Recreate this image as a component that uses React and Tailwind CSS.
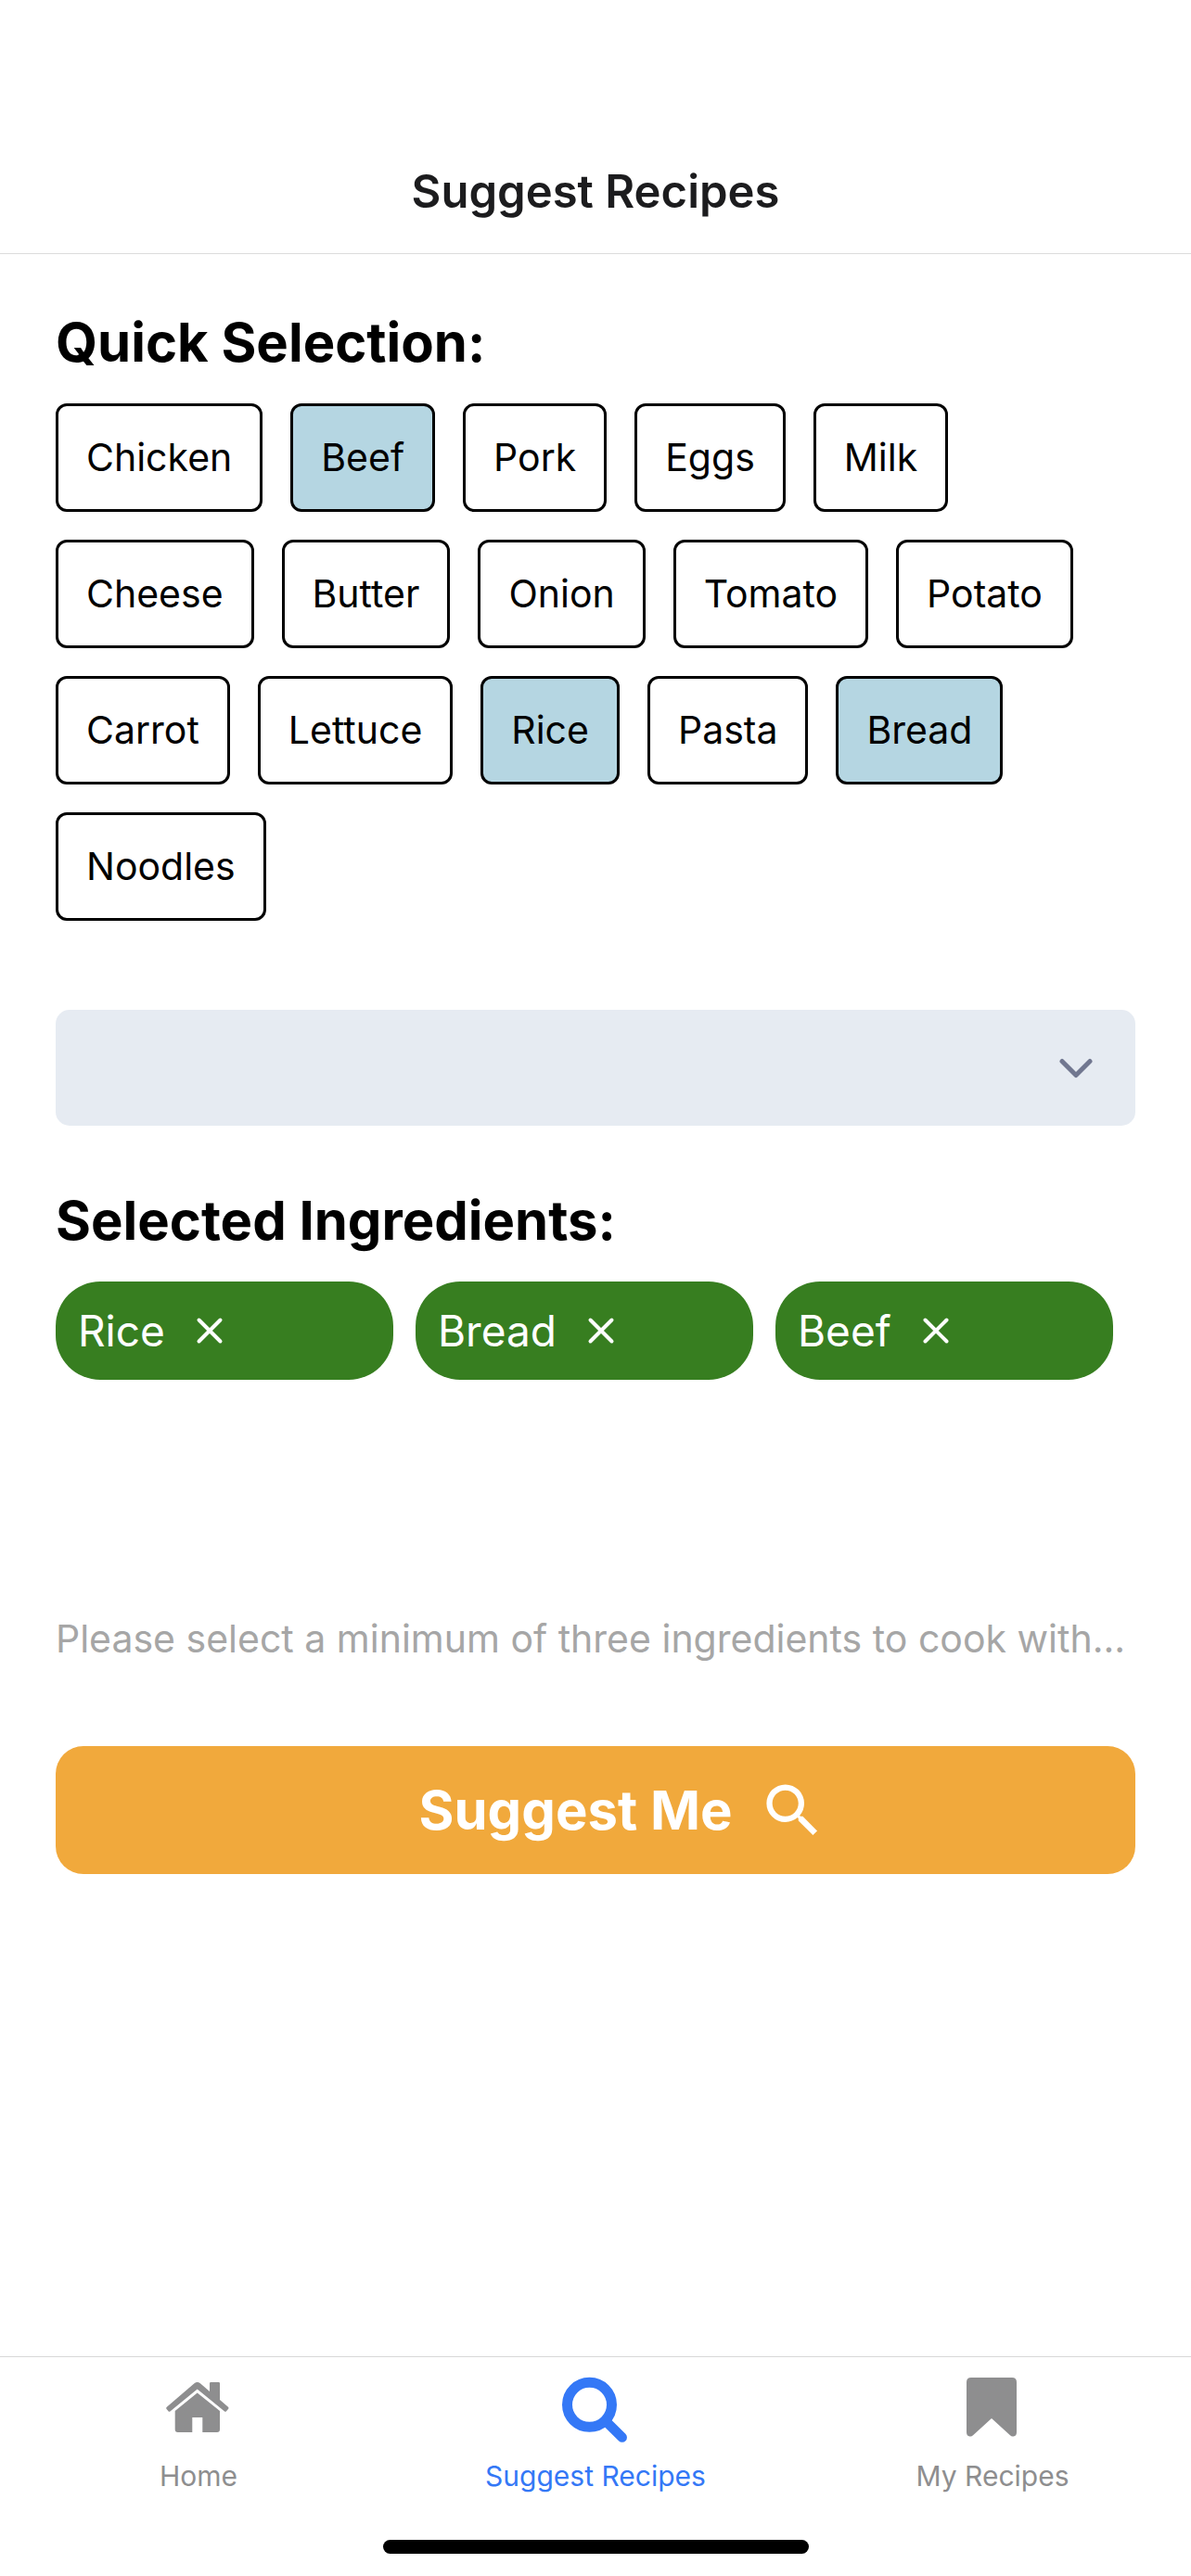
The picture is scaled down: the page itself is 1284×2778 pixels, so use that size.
import { useState } from "react";

const INGREDIENTS = [
  "Chicken", "Beef", "Pork", "Eggs", "Milk",
  "Cheese", "Butter", "Onion", "Tomato", "Potato",
  "Carrot", "Lettuce", "Rice", "Pasta", "Bread", "Noodles",
];

function HomeIcon() {
  return (
    <svg viewBox="0 0 72 72" className="size-[72px]" fill="currentColor" aria-hidden="true">
      <path d="M1.800 35.800 L31.500 10.200 Q34.700 7.600 37.900 10.200 L48 19 V10.200 Q48 9 49.200 9 H57.800 Q59 9 59 10.200 V28 L68 35.800 Q69 36.700 68.200 37.700 L66 40.300 Q65.100 41.300 64.100 40.500 L34.700 16.500 L5.400 40.500 Q4.400 41.300 3.500 40.300 L1.400 37.700 Q0.700 36.700 1.800 35.800 Z" />
      <path d="M34.700 20.500 L59 40 V60 Q59 63 56 63 H40.300 V47 H29.300 V63 H13.700 Q10.700 63 10.700 60 V40 Z" />
    </svg>
  );
}

function TabSearchIcon() {
  return (
    <svg viewBox="0 0 72 72" className="size-[72px] overflow-visible" fill="none" stroke="currentColor" aria-hidden="true">
      <circle cx="29.500" cy="33.300" r="24" strokeWidth="11" />
      <path d="M46.500 50.500 L64.700 68.500" strokeWidth="10.500" strokeLinecap="round" />
    </svg>
  );
}

function BookmarkIcon() {
  return (
    <svg viewBox="0 0 72 72" className="size-[72px]" fill="currentColor" aria-hidden="true">
      <path d="M13 4 H57 Q62 4 62 9 V63 Q62 67 58.500 67.500 Q56.500 67.800 55 66.200 L35 48 L15 66.200 Q13.500 67.800 11.500 67.500 Q8 67 8 63 V9 Q8 4 13 4 Z" />
    </svg>
  );
}

function SearchIcon() {
  return (
    <svg viewBox="0 0 24 24" className="size-[75px]" fill="currentColor" aria-hidden="true">
      <path d="M15.500 14h-.79l-.28-.27A6.471 6.471 0 0 0 16 9.500 6.500 6.500 0 1 0 9.500 16c1.610 0 3.090-.59 4.230-1.570l.27.28v.79l5 4.990L20.490 19l-4.990-5zm-6 0C7.010 14 5 11.990 5 9.500S7.010 5 9.500 5 14 7.010 14 9.500 11.990 14 9.500 14z" />
    </svg>
  );
}

const TABS = [
  { label: "Home", Icon: HomeIcon, tone: "text-[#8e8e8f]" },
  { label: "Suggest Recipes", Icon: TabSearchIcon, tone: "text-[#3478f6]", current: true },
  { label: "My Recipes", Icon: BookmarkIcon, tone: "text-[#8e8e8f]" },
];

export default function App() {
  const [selected, setSelected] = useState(["Rice", "Bread", "Beef"]);
  const toggle = (name) =>
    setSelected((list) => (list.includes(name) ? list.filter((n) => n !== name) : [...list, name]));

  return (
    <div className="flex min-h-screen flex-col bg-white font-['Inter',sans-serif] text-black">
      <header className="border-b border-[#dcdcdc] pt-[174px] pb-[33px]">
        <h1 className="text-center text-[49px] leading-[66px] font-semibold text-[#1c1c1e]">Suggest Recipes</h1>
      </header>

      <main className="flex flex-1 flex-col px-[60px] pt-[59px]">
        <h2 className="text-[58px] leading-[72px] font-bold">Quick Selection:</h2>
        <div className="mt-[30px] flex flex-wrap gap-[30px]">
          {INGREDIENTS.map((name) => (
            <button
              key={name}
              type="button"
              aria-pressed={selected.includes(name)}
              onClick={() => toggle(name)}
              className={
                "rounded-[12px] border-3 border-black px-[30px] py-[30px] text-[41px] leading-[51px] " +
                (selected.includes(name) ? "bg-[#b5d6e2]" : "bg-white")
              }
            >
              {name}
            </button>
          ))}
        </div>

        <div className="relative mt-[96px]">
          <select
            aria-label="Ingredient"
            defaultValue=""
            className="block h-[125px] w-full appearance-none rounded-[15px] bg-[#e6ebf2] px-[45px] text-[41px]"
          >
            <option value="" />
            {INGREDIENTS.map((name) => (
              <option key={name}>{name}</option>
            ))}
          </select>
          <svg
            viewBox="0 0 36 24"
            className="pointer-events-none absolute top-1/2 right-[46px] h-[24px] w-[36px] -translate-y-1/2"
            fill="none"
            stroke="#717790"
            strokeWidth="5"
            strokeLinecap="round"
            strokeLinejoin="round"
            aria-hidden="true"
          >
            <path d="M3 4.500 L18 19.500 L33 4.500" />
          </svg>
        </div>

        <h2 className="mt-[66px] text-[58px] leading-[72px] font-bold">Selected Ingredients:</h2>
        <ul className="mt-[30px] flex flex-wrap gap-[24px]">
          {selected.map((name) => (
            <li
              key={name}
              className="flex h-[106px] w-[364px] items-center rounded-[48px] bg-[#377e20] px-[24px] text-[46px] text-white"
            >
              {name}
              <button type="button" aria-label={"Remove " + name} onClick={() => toggle(name)} className="ml-[24px]">
                <svg
                  viewBox="0 0 48 48"
                  className="size-[48px]"
                  fill="none"
                  stroke="currentColor"
                  strokeWidth="4"
                  strokeLinecap="round"
                  aria-hidden="true"
                >
                  <path d="M12.500 12.500 L35.500 35.500 M35.500 12.500 L12.500 35.500" />
                </svg>
              </button>
            </li>
          ))}
        </ul>

        <p className="mt-[252px] text-[41px] leading-[54px] text-[#a6a6a6]">
          Please select a minimum of three ingredients to cook with...
        </p>
        <button
          type="button"
          className="mt-[89px] flex h-[138px] w-full items-center justify-center gap-[28px] rounded-[30px] bg-[#f1a93c] pl-[60px] text-[58px] font-bold text-white"
        >
          Suggest Me
          <SearchIcon />
        </button>
      </main>

      <nav className="border-t border-[#d8d8d8] pt-[18px] pb-[24px]">
        <div className="grid grid-cols-3">
          {TABS.map(({ label, Icon, tone, current }) => (
            <a
              key={label}
              href="#"
              aria-current={current ? "page" : undefined}
              className={"flex flex-col items-center gap-[20px] text-[30px] leading-[36px] " + tone}
            >
              <Icon />
              {label}
            </a>
          ))}
        </div>
        <div className="mx-auto mt-[51px] h-[15px] w-[459px] rounded-full bg-black" />
      </nav>
    </div>
  );
}
